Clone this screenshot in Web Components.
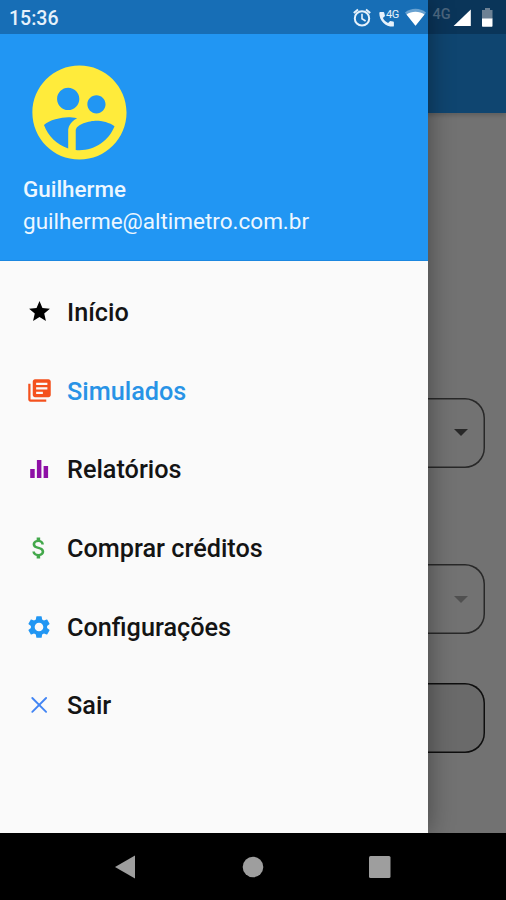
<!DOCTYPE html>
<html lang="pt-BR">
<head>
<meta charset="utf-8">
<title>Simulados</title>
<style>
  body { margin: 0; font-family: Roboto, "Liberation Sans", sans-serif; }
</style>
</head>
<body>
<phone-screen>
  <app-page slot="page">
    <select-field arrow></select-field>
    <select-field arrow class="disabled"></select-field>
    <select-field class="text"></select-field>
  </app-page>
  <side-drawer slot="drawer">
    <user-header slot="header">
      <span slot="name">Guilherme</span>
      <span slot="email">guilherme@altimetro.com.br</span>
    </user-header>
    <drawer-item icon="star" color="#000">Início</drawer-item>
    <drawer-item icon="books" color="#f4511e" active>Simulados</drawer-item>
    <drawer-item icon="bars" color="#8e0fa6">Relatórios</drawer-item>
    <drawer-item icon="money" color="#43a84b">Comprar créditos</drawer-item>
    <drawer-item icon="gear" color="#2196f3">Configurações</drawer-item>
    <drawer-item icon="close" color="#4285f4">Sair</drawer-item>
  </side-drawer>
  <status-bar slot="status">15:36</status-bar>
  <nav-bar slot="nav"></nav-bar>
</phone-screen>

<script>
const ICONS = {
  star: `<svg width="25" height="25" viewBox="0 0 24 24"><path d="M12 17.27 18.18 21l-1.64-7.03L22 9.24l-7.19-.61L12 2 9.19 8.63 2 9.24l5.46 4.73L5.82 21z"/></svg>`,
  books: `<svg width="27" height="27" viewBox="0 0 24 24"><path d="M4 6H2v14c0 1.1.9 2 2 2h14v-2H4V6zm16-4H8c-1.1 0-2 .9-2 2v12c0 1.1.9 2 2 2h12c1.1 0 2-.9 2-2V4c0-1.1-.9-2-2-2zm-1 9H9V9h10v2zm-4 4H9v-2h6v2zm4-8H9V5h10v2z"/></svg>`,
  bars: `<svg width="28" height="28" viewBox="0 0 28 28"><path d="M5.2 14h4.5v9H5.2zM11.9 5h4.5v18h-4.5zM18.6 11h4.5v12h-4.5z"/></svg>`,
  money: `<svg width="28" height="28" viewBox="0 0 24 24"><path d="M11.8 10.9c-2.27-.59-3-1.2-3-2.15 0-1.09 1.01-1.85 2.7-1.85 1.78 0 2.44.85 2.5 2.1h2.21c-.07-1.72-1.12-3.3-3.21-3.81V3h-3v2.16c-1.94.42-3.5 1.68-3.5 3.61 0 2.31 1.91 3.46 4.7 4.13 2.5.6 3 1.48 3 2.41 0 .69-.49 1.79-2.7 1.79-2.06 0-2.87-.92-2.98-2.1h-2.2c.12 2.19 1.76 3.42 3.68 3.83V21h3v-2.15c1.95-.37 3.5-1.5 3.5-3.55 0-2.84-2.43-3.81-4.7-4.4z"/></svg>`,
  gear: `<svg width="26" height="26" viewBox="0 0 24 24"><path d="M19.43 12.98c.04-.32.07-.64.07-.98s-.03-.66-.07-.98l2.11-1.65c.19-.15.24-.42.12-.64l-2-3.46c-.12-.22-.39-.3-.61-.22l-2.49 1c-.52-.4-1.08-.73-1.69-.98l-.38-2.65C14.46 2.18 14.25 2 14 2h-4c-.25 0-.46.18-.49.42l-.38 2.65c-.61.25-1.17.59-1.69.98l-2.49-1c-.23-.09-.49 0-.61.22l-2 3.46c-.13.22-.07.49.12.64l2.11 1.65c-.04.32-.07.65-.07.98s.03.66.07.98l-2.11 1.65c-.19.15-.24.42-.12.64l2 3.46c.12.22.39.3.61.22l2.49-1c.52.4 1.08.73 1.69.98l.38 2.65c.03.24.24.42.49.42h4c.25 0 .46-.18.49-.42l.38-2.65c.61-.25 1.17-.59 1.69-.98l2.49 1c.23.09.49 0 .61-.22l2-3.46c.12-.22.07-.49-.12-.64l-2.11-1.65zM12 16c-2.2 0-4-1.8-4-4s1.8-4 4-4 4 1.8 4 4-1.8 4-4 4z"/></svg>`,
  close: `<svg width="28" height="28" viewBox="0 0 28 28"><path d="M7.3 7l13.800 13.800M21.100 7 7.300 20.800" fill="none" stroke="currentColor" stroke-width="1.9" stroke-linecap="round"/></svg>`
};

class PhoneScreen extends HTMLElement {
  constructor() {
    super();
    this.attachShadow({ mode: "open" }).innerHTML = `
      <style>
        :host { display: grid; grid-template-rows: 833px 67px; width: 506px; height: 900px; overflow: hidden; background: #000; }
        /* page, scrim, drawer and status bar are stacked in one cell */
        .stack { display: grid; grid-template: 833px / 506px; overflow: hidden; }
        .stack > * { grid-area: 1 / 1; }
        .scrim { background: rgba(0, 0, 0, 0.54); }
        slot { display: contents; }
        ::slotted(*) { grid-area: 1 / 1; }
      </style>
      <div class="stack">
        <slot name="page"></slot>
        <div class="scrim"></div>
        <slot name="drawer"></slot>
        <slot name="status"></slot>
      </div>
      <div><slot name="nav"></slot></div>`;
  }
}
customElements.define("phone-screen", PhoneScreen);

class StatusBar extends HTMLElement {
  constructor() {
    super();
    this.attachShadow({ mode: "open" }).innerHTML = `
      <style>
        :host { display: flex; align-items: center; justify-content: space-between; box-sizing: border-box; height: 34px; padding: 2px 0 0 9px; background: rgba(0, 15, 35, 0.29); color: #e6f1fb; font-size: 19.5px; font-weight: 500; align-self: start; }
        svg { display: block; }
      </style>
      <slot></slot>
      <svg width="166" height="32" viewBox="340 2 166 32" fill="#e6f1fb">
        <g fill="none" stroke="#e6f1fb" stroke-width="2">
          <circle cx="362" cy="18.4" r="7.2"/>
          <path d="M362 13.8v5l3.6 2.2" stroke-width="1.6"/>
          <path d="M353.8 13l4.2-3.5M370.2 13l-4.2-3.5"/>
        </g>
        <path d="M380.2 12h3.2c.5 0 .8.4.9.9l.7 3-2.1 2.1c1.3 2.4 2.9 3.9 5.2 5l2-2.1 3 .7c.5.1.8.4.8.9v3.2c0 .5-.4.9-.9.9-7.7 0-13.7-6-13.7-13.7 0-.5.4-.9.9-.9z"/>
        <text x="386" y="17.5" font-size="11" font-weight="400" letter-spacing="-0.5">4G</text>
        <path d="M405 12.6c6-5 15-5 21 0l-10.5 13.2z" opacity=".4"/>
        <path d="M406.500 14.400c5-3.700 13-3.700 18 0l-9 11.400z" fill="#fff"/>
        <text x="432.5" y="19.300" font-size="14.5" font-weight="500" fill="#48627a">4G</text>
        <path d="M470.8 9.5v16.600h-17.200z" fill="#fff"/>
        <path d="M485 8h5v2h2.500v9H482v-9h3z" fill="#6d8194"/>
        <path d="M482 18.500h10.500v7.200c0 .6-.4 1-1 1h-8.500c-.6 0-1-.4-1-1z" fill="#fff"/>
      </svg>`;
  }
}
customElements.define("status-bar", StatusBar);

class AppPage extends HTMLElement {
  constructor() {
    super();
    this.attachShadow({ mode: "open" }).innerHTML = `
      <style>
        :host { display: flex; flex-direction: column; background: #f8f8f8; }
        header { flex: none; height: 113px; background: #2196f3; box-shadow: 0 2px 5px rgba(0, 0, 0, 0.2); }
        main { display: flex; flex-direction: column; padding: 284.5px 21px 0 21px; }
        ::slotted(.disabled) { --arrow: #aeaeae; margin-top: 96.5px; }
        ::slotted(.text) { --line: #202020; --fill: #e8e8e8; margin-top: 49px; }
      </style>
      <header></header>
      <main><slot></slot></main>`;
  }
}
customElements.define("app-page", AppPage);

class SelectField extends HTMLElement {
  constructor() {
    super();
    this.attachShadow({ mode: "open" }).innerHTML = `
      <style>
        :host { display: flex; align-items: center; justify-content: flex-end; box-sizing: border-box; height: 70px; padding-right: 17.5px; border-radius: 20px; background: var(--fill, transparent); box-shadow: inset 0 0 0 1.5px var(--line, #585858); }
        i { display: none; border: 7px solid transparent; border-top-color: var(--arrow, #585858); border-bottom: 0; }
        :host([arrow]) i { display: block; }
      </style>
      <i></i>`;
  }
}
customElements.define("select-field", SelectField);

class SideDrawer extends HTMLElement {
  constructor() {
    super();
    this.attachShadow({ mode: "open" }).innerHTML = `
      <style>
        :host { display: flex; flex-direction: column; width: 428px; background: #fafafa; box-shadow: 0 0 24px rgba(0, 0, 0, 0.4); }
        nav { display: flex; flex-direction: column; padding-top: 12px; }
      </style>
      <slot name="header"></slot>
      <nav><slot></slot></nav>`;
  }
}
customElements.define("side-drawer", SideDrawer);

class UserHeader extends HTMLElement {
  constructor() {
    super();
    this.attachShadow({ mode: "open" }).innerHTML = `
      <style>
        :host { display: flex; flex-direction: column; box-sizing: border-box; height: 261px; padding: 56px 23px 0; background: #2196f3; border-bottom: 1px solid #1b87e0; color: #edf7ff; }
        svg { display: block; flex: none; margin-bottom: 4px; }
        .name { font-size: 22.4px; line-height: 32px; font-weight: 500; }
        .email { font-size: 22.5px; line-height: 32px; }
      </style>
      <svg width="113" height="113" viewBox="0 0 24 24" fill="#ffeb3b"><path d="M11.99 2c-5.52 0-10 4.48-10 10s4.48 10 10 10 10-4.48 10-10-4.48-10-10-10zm3.61 6.34c1.07 0 1.93.86 1.93 1.93 0 1.07-.86 1.93-1.93 1.93-1.07 0-1.93-.86-1.93-1.93-.01-1.07.86-1.93 1.93-1.93zm-6-1.58c1.3 0 2.36 1.06 2.36 2.36 0 1.3-1.06 2.36-2.36 2.36s-2.36-1.06-2.36-2.36c0-1.31 1.05-2.36 2.36-2.36zm0 9.13v3.75c-2.4-.75-4.3-2.6-5.14-4.96 1.05-1.12 3.67-1.69 5.14-1.69.53 0 1.2.08 1.9.22-1.64.87-1.9 2.02-1.9 2.68zM11.99 20c-.27 0-.53-.01-.79-.04v-4.07c0-1.42 2.94-2.13 4.4-2.13 1.07 0 2.92.39 3.84 1.15-1.17 2.97-4.06 5.09-7.45 5.09z"/></svg>
      <div class="name"><slot name="name"></slot></div>
      <div class="email"><slot name="email"></slot></div>`;
  }
}
customElements.define("user-header", UserHeader);

class DrawerItem extends HTMLElement {
  constructor() {
    super();
    this.attachShadow({ mode: "open" });
  }

  connectedCallback() {
    this.shadowRoot.innerHTML = `
      <style>
        :host { display: flex; align-items: center; gap: 14px; height: 78.7px; padding-left: 25px; color: #141414; font-size: 25.25px; font-weight: 500; }
        :host([active]) { color: #2893e6; }
        .icon { display: grid; place-items: center; width: 28px; height: 28px; margin-top: -1px; color: ${this.getAttribute("color")}; }
        svg { display: block; fill: currentColor; }
      </style>
      <span class="icon">${ICONS[this.getAttribute("icon")]}</span>
      <slot></slot>`;
  }
}
customElements.define("drawer-item", DrawerItem);

class NavBar extends HTMLElement {
  constructor() {
    super();
    this.attachShadow({ mode: "open" }).innerHTML = `
      <style>
        :host { display: grid; grid-template-columns: repeat(3, 127px); justify-content: center; place-items: center; height: 67px; padding-left: 0.5px; background: #000; }
        svg { display: block; fill: #9e9e9e; }
      </style>
      <svg width="24" height="24"><path d="M1 12 21 .5v23z"/></svg>
      <svg width="22" height="22"><circle cx="11" cy="11" r="10.3"/></svg>
      <svg width="22" height="22"><rect width="21.5" height="22" rx="1.5"/></svg>`;
  }
}
customElements.define("nav-bar", NavBar);
</script>
</body>
</html>
